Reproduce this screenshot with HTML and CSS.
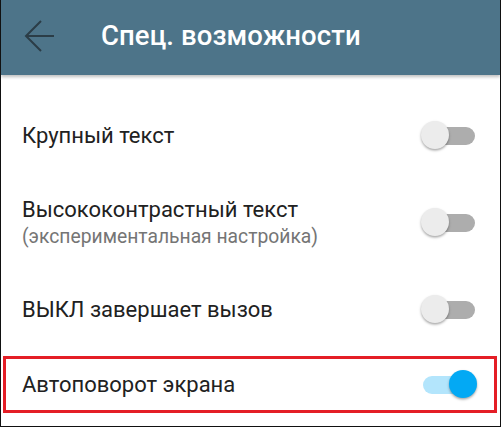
FILE: index.html
```html
<!DOCTYPE html>
<html lang="ru">
<head>
<meta charset="utf-8">
<link rel="stylesheet" href="styles.css">
</head>
<body>
<div class="frame">
  <header class="appbar">
    <svg class="back" width="32" height="34" viewBox="0 0 32 34">
      <path d="M30 16H2 M17 1L2 16L17 31" fill="none" stroke="#2b3d47" stroke-width="2"/>
    </svg>
    <h1 class="title">Спец. возможности</h1>
  </header>
  <main class="list">
    <div class="row">
      <div class="text"><div class="primary">Крупный текст</div></div>
      <div class="switch"><span class="track"></span><span class="thumb"></span></div>
    </div>
    <div class="row tall">
      <div class="text">
        <div class="primary">Высококонтрастный текст</div>
        <div class="secondary">(экспериментальная настройка)</div>
      </div>
      <div class="switch"><span class="track"></span><span class="thumb"></span></div>
    </div>
    <div class="row">
      <div class="text"><div class="primary">ВЫКЛ завершает вызов</div></div>
      <div class="switch"><span class="track"></span><span class="thumb"></span></div>
    </div>
    <div class="row">
      <div class="highlight">
        <div class="text"><div class="primary">Автоповорот экрана</div></div>
        <div class="switch on"><span class="track"></span><span class="thumb"></span></div>
      </div>
    </div>
  </main>
</div>
</body>
</html>
```
FILE: styles.css
```css
* { box-sizing: border-box; }
html, body { margin: 0; padding: 0; }
body {
  width: 501px;
  height: 427px;
  font-family: Roboto, "Liberation Sans", sans-serif;
  background: #fff;
  overflow: hidden;
}
.frame {
  width: 501px;
  height: 427px;
  border: 1px solid #111;
  border-top: none;
  display: flex;
  flex-direction: column;
  overflow: hidden;
}
.appbar {
  height: 75px;
  background: #4d7489;
  display: flex;
  align-items: center;
  box-shadow: 0 2px 3px rgba(0,0,0,0.25);
  position: relative;
  z-index: 1;
  flex-shrink: 0;
}
.back {
  margin-left: 23px;
  margin-top: -2px;
}
.title {
  margin: 0 0 0 45px;
  color: #fff;
  font-size: 27.5px;
  font-weight: 500;
  letter-spacing: 0.1px;
  margin-top: -4px;
}
.list {
  padding-top: 23px;
  display: flex;
  flex-direction: column;
}
.row {
  height: 75px;
  display: flex;
  align-items: center;
  padding: 0 25px 0 21px;
}
.row.tall { height: 99px; }
.row:last-child { padding: 0 3px 0 2px; }
.highlight {
  flex: 1;
  height: 57px;
  border: 3px solid #e41e26;
  display: flex;
  align-items: center;
  padding: 0 17px 0 16px;
}
.text { flex: 1; }
.primary {
  font-size: 22px;
  color: #212121;
  line-height: 28px;
}
.secondary {
  font-size: 19.3px;
  color: #757575;
  line-height: 26px;
}
.switch {
  position: relative;
  width: 54px;
  height: 30px;
}
.track {
  position: absolute;
  left: 4px;
  right: 0;
  top: 6px;
  height: 18px;
  border-radius: 9px;
  background: #adadad;
}
.thumb {
  position: absolute;
  left: 0;
  top: 0;
  width: 28px;
  height: 28px;
  border-radius: 50%;
  background: #ececec;
  box-shadow: 0 1.5px 2.5px rgba(0,0,0,0.35);
}
.switch.on .track { background: #b3e5fc; left: 0; right: 4px; }
.switch.on .thumb { left: auto; right: 0; background: #03a9f4; }
```
